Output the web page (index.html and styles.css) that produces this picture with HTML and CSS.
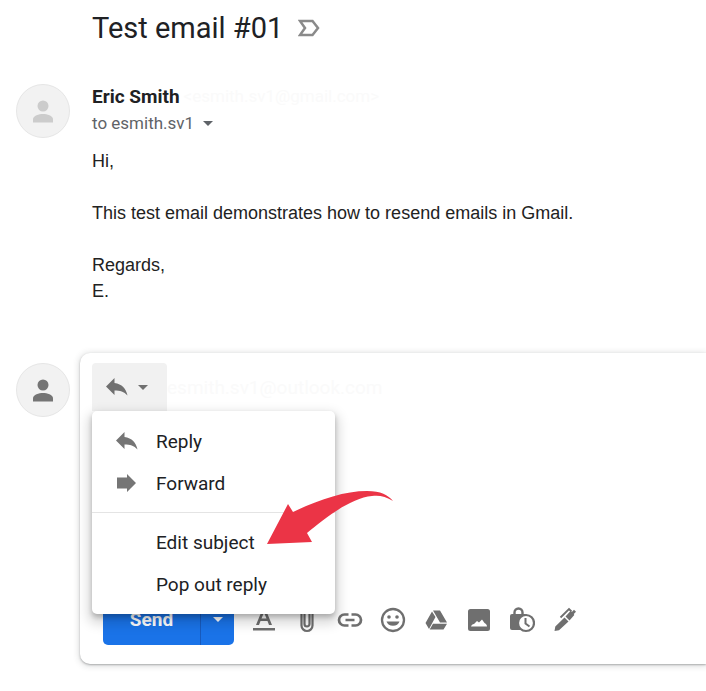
FILE: index.html
```html
<!DOCTYPE html>
<html lang="en">
<head>
  <meta charset="utf-8">
  <meta name="viewport" content="width=device-width, initial-scale=1">
  <title>Test email #01</title>
  <link rel="stylesheet" href="styles.css">
</head>
<body>
  <main class="thread">
    <header class="subject">
      <h1>Test email #01</h1>
      <button class="icon-button importance" type="button" aria-label="Mark as important">
        <svg width="22" height="18" viewBox="0 0 22 18" fill="none" stroke="#8a8a8a" stroke-width="2.500"><path d="M2 2h12.500l5.500 7-5.500 7H2l5-7z"/></svg>
      </button>
    </header>

    <article class="message">
      <div class="avatar avatar-light">
        <svg width="22" height="23" viewBox="0 0 22 23" fill="currentColor"><circle cx="11" cy="6" r="5.500"/><path d="M1 22.500v-3c0-4 6-5.500 10-5.500s10 1.500 10 5.500v3z"/></svg>
      </div>
      <div class="message-content">
        <div class="sender">
          <h2>Eric Smith</h2>
          <span class="address">&lt;esmith.sv1@gmail.com&gt;</span>
        </div>
        <button class="recipient" type="button">
          to esmith.sv1
          <svg width="10" height="5" viewBox="0 0 10 5" fill="currentColor"><path d="M0 0h10L5 5z"/></svg>
        </button>
        <div class="message-body">
          <p>Hi,</p>
          <p>This test email demonstrates how to resend emails in Gmail.</p>
          <p>Regards,<br>E.</p>
        </div>
      </div>
    </article>

    <section class="reply">
      <div class="avatar">
        <svg width="22" height="23" viewBox="0 0 22 23" fill="currentColor"><circle cx="11" cy="6" r="5.500"/><path d="M1 22.500v-3c0-4 6-5.500 10-5.500s10 1.500 10 5.500v3z"/></svg>
      </div>
      <form class="compose">
        <div class="compose-header">
          <button class="reply-type" type="button" aria-label="Type of response" aria-expanded="true">
            <svg width="22" height="18" viewBox="0 0 22 18" fill="currentColor"><path d="M8.500 0v5C16 6 20 10.500 21.500 17.500 18 13.500 14 12.500 8.500 12.500V17L0 8.500z"/></svg>
            <svg width="10" height="5" viewBox="0 0 10 5" fill="currentColor"><path d="M0 0h10L5 5z"/></svg>
          </button>
          <span class="address address-to">esmith.sv1@outlook.com</span>
          <div class="menu" role="menu">
            <button class="menu-item" type="button" role="menuitem">
              <svg width="22" height="18" viewBox="0 0 22 18" fill="currentColor"><path d="M8.500 0v5C16 6 20 10.500 21.500 17.500 18 13.500 14 12.500 8.500 12.500V17L0 8.500z"/></svg>
              <span>Reply</span>
            </button>
            <button class="menu-item" type="button" role="menuitem">
              <svg width="22" height="18" viewBox="0 0 22 18" fill="currentColor"><path d="M1 3.500h10V0l9 9-9 9v-3.500H1z"/></svg>
              <span>Forward</span>
            </button>
            <hr>
            <button class="menu-item" type="button" role="menuitem"><span>Edit subject</span></button>
            <button class="menu-item" type="button" role="menuitem"><span>Pop out reply</span></button>
            <svg class="pointer" width="128" height="56" viewBox="0 0 128 56" fill="#eb3446"><path d="M1 54 22 14l5 8C52 10 78 1 101 1c14 0 21 4 26 10-7-5-15-6-21-5-22 2-48 23-65 37l5 9z"/></svg>
          </div>
        </div>
        <textarea class="compose-body" aria-label="Message body"></textarea>
        <div class="toolbar">
          <div class="send-group">
            <button class="send" type="button">Send</button>
            <button class="send-more" type="button" aria-label="More send options">
              <svg width="10" height="5" viewBox="0 0 10 5" fill="currentColor"><path d="M0 0h10L5 5z"/></svg>
            </button>
          </div>
          <button class="icon-button" type="button" aria-label="Formatting options">
            <svg width="26" height="26" viewBox="0 0 26 26" fill="currentColor"><path fill-rule="evenodd" d="M11.500 2h3L21 18h-3l-1.500-4h-7L8 18H5zM13 5.500 10.500 11.500h5zM2 21h22v2.500H2z"/></svg>
          </button>
          <button class="icon-button" type="button" aria-label="Attach files">
            <svg width="26" height="26" viewBox="0 0 26 26" fill="none" stroke="currentColor" stroke-width="2.200"><path d="M18.500 6v12.500a5.500 5.500 0 0 1-11 0V5.500a4 4 0 0 1 8 0V17a2.500 2.500 0 0 1-5 0V6"/></svg>
          </button>
          <button class="icon-button" type="button" aria-label="Insert link">
            <svg width="26" height="26" viewBox="0 0 26 26" fill="none" stroke="currentColor" stroke-width="2.700"><path d="M11.500 7.500h-4a5.500 5.500 0 0 0 0 11h4M14.500 7.500h4a5.500 5.500 0 0 1 0 11h-4M8.500 13h9"/></svg>
          </button>
          <button class="icon-button" type="button" aria-label="Insert emoji">
            <svg width="26" height="26" viewBox="0 0 26 26" fill="currentColor"><circle cx="13" cy="13" r="11" fill="none" stroke="currentColor" stroke-width="2.300"/><circle cx="9" cy="10" r="1.800"/><circle cx="17" cy="10" r="1.800"/><path d="M6.500 14.500h13a6.800 6 0 0 1-13 0z"/></svg>
          </button>
          <button class="icon-button" type="button" aria-label="Insert files using Drive">
            <svg width="26" height="26" viewBox="0 0 26 26" fill="currentColor"><path d="M9 4.500 2.500 16l3.500 6L12.500 10zM10 3.500h7l7 12h-7zM10 16.700h14L20.500 22.500H6.700z"/></svg>
          </button>
          <button class="icon-button" type="button" aria-label="Insert photo">
            <svg width="26" height="26" viewBox="0 0 26 26" fill="currentColor"><path fill-rule="evenodd" d="M4.500 2h17A2.500 2.500 0 0 1 24 4.500v17a2.500 2.500 0 0 1-2.500 2.500h-17A2.500 2.500 0 0 1 2 21.500v-17A2.500 2.500 0 0 1 4.500 2zM5 19.500h16c0-2-1.500-3-2.500-3.500L16 12.500l-3 3-2-1.500-3 3c-1.500 0-2.500 1-3 2.500z"/></svg>
          </button>
          <button class="icon-button" type="button" aria-label="Toggle confidential mode">
            <svg width="26" height="26" viewBox="0 0 26 26"><path d="M5.500 8V5.500a4 4 0 0 1 8 0V8" fill="none" stroke="currentColor" stroke-width="2.400"/><rect x="1" y="7" width="17" height="16" rx="2" fill="currentColor"/><circle cx="17" cy="16" r="8" fill="#fff" stroke="currentColor" stroke-width="2.200"/><path d="M16.500 11v5.500l4 3" fill="none" stroke="currentColor" stroke-width="2"/></svg>
          </button>
          <button class="icon-button" type="button" aria-label="Insert signature">
            <svg width="26" height="26" viewBox="0 0 26 26" fill="currentColor"><path d="m12.500 10.500 4 4-9.500 8.700L2.500 24l.800-4.500zM13.500 9.500 18.500 4l1.300 1L22 2.800l2 2-2.200 2.200.500 1L17.500 13.500z"/><path d="m8.500 10.500 8.500-8.500 2.500 2.500" fill="none" stroke="currentColor" stroke-width="1.800"/></svg>
          </button>
        </div>
      </form>
    </section>
  </main>
</body>
</html>
```

FILE: styles.css
```css
*, *::before, *::after {
  margin: 0;
  padding: 0;
  box-sizing: border-box;
}

body {
  min-height: 100vh;
  background-color: #ffffff;
  color: #202124;
  font-family: Roboto, sans-serif;
  overflow-x: hidden;
}

button {
  border: none;
  background: none;
  color: inherit;
  font: inherit;
  cursor: pointer;
}

svg {
  display: block;
  flex-shrink: 0;
}

.thread {
  padding: 8px 0 24px 16px;
}

.subject {
  display: flex;
  align-items: center;
  gap: 15px;
  height: 40px;
  margin-bottom: 36px;
  padding-left: 76px;
}

.subject h1 {
  font-size: 29px;
  font-weight: 400;
}

.icon-button {
  display: flex;
  align-items: center;
  justify-content: center;
  width: 43px;
  height: 48px;
  color: #6f6f6f;
}

.importance {
  width: 22px;
  height: 24px;
}

.message {
  display: flex;
  gap: 22px;
}

.avatar {
  display: flex;
  flex-shrink: 0;
  align-items: center;
  justify-content: center;
  width: 54px;
  height: 54px;
  border: 1px solid #e6e6e6;
  border-radius: 50%;
  background-color: #f2f2f2;
  color: #757575;
}

.avatar-light {
  color: #cccccc;
}

.message-content {
  flex: 1;
}

.sender {
  display: flex;
  align-items: center;
  gap: 4px;
  height: 24px;
}

.sender h2 {
  font-size: 19px;
  font-weight: 700;
}

.address {
  color: #fafafa;
  font-size: 17px;
}

.address-to {
  font-size: 19px;
}

.recipient {
  display: flex;
  align-items: center;
  gap: 9px;
  height: 30px;
  color: #5f6368;
  font-size: 17px;
}

.message-body {
  margin-top: 10px;
  color: #222222;
  font-family: "Liberation Sans", Arial, sans-serif;
  font-size: 18px;
  line-height: 26px;
}

.message-body p + p {
  margin-top: 26px;
}

.reply {
  display: flex;
  gap: 10px;
  margin-top: 49px;
}

.reply .avatar {
  margin-top: 10px;
}

.compose {
  flex: 1;
  padding: 10px 0 19px 12px;
  border-radius: 10px 0 0 10px;
  background-color: #ffffff;
  box-shadow: 0 1px 2px rgba(60, 64, 67, 0.35), 0 1px 6px 1px rgba(60, 64, 67, 0.18);
}

.compose-header {
  position: relative;
  display: flex;
  align-items: center;
}

.reply-type {
  display: flex;
  align-items: center;
  gap: 10px;
  width: 75px;
  height: 48px;
  padding-left: 14px;
  border-radius: 4px 4px 0 0;
  background-color: #f1f1f1;
  color: #707070;
}

.compose-body {
  display: block;
  width: 100%;
  height: 183px;
  border: none;
  outline: none;
  resize: none;
  font: inherit;
}

.menu {
  position: absolute;
  top: 100%;
  left: 0;
  z-index: 1;
  width: 243px;
  padding: 9px 0;
  border-radius: 5px;
  background-color: #ffffff;
  box-shadow: 0 3px 5px rgba(0, 0, 0, 0.22), 0 6px 12px 4px rgba(0, 0, 0, 0.15);
}

.menu-item {
  display: flex;
  align-items: center;
  width: 100%;
  height: 42px;
  padding-left: 24px;
  color: #202124;
  font-size: 19px;
}

.menu-item svg {
  margin-right: 18px;
  color: #757575;
}

.menu-item span:only-child {
  padding-left: 40px;
}

.menu hr {
  height: 1px;
  margin: 8px 0;
  border: none;
  background-color: #e4e4e4;
}

.pointer {
  position: absolute;
  top: 79px;
  left: 174px;
}

.toolbar {
  display: flex;
  align-items: center;
  padding-left: 11px;
}

.send-group {
  display: flex;
  height: 51px;
  margin-right: 8px;
  border-radius: 5px;
  background-color: #1a73e8;
  color: #ffffff;
}

.send {
  width: 98px;
  border-right: 1px solid #185abc;
  font-size: 19px;
  font-weight: 700;
}

.send-more {
  display: flex;
  align-items: center;
  justify-content: center;
  width: 33px;
}
```
